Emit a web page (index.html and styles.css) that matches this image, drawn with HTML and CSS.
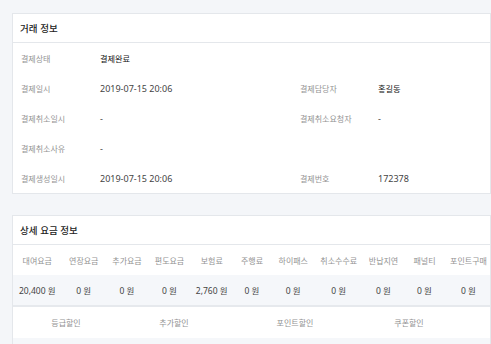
FILE: index.html
```html
<!DOCTYPE html>
<html lang="ko">
<head>
<meta charset="utf-8">
<title>거래 정보</title>
<link rel="stylesheet" href="styles.css">
</head>
<body>
<div class="page">
  <section class="card">
    <h2 class="card-title">거래 정보</h2>
    <div class="info">
      <div class="info-row">
        <span class="lbl">결제상태</span><span class="val strong">결제완료</span>
      </div>
      <div class="info-row">
        <span class="lbl">결제일시</span><span class="val num">2019-07-15 20:06</span>
        <span class="lbl">결제담당자</span><span class="val strong">홍길동</span>
      </div>
      <div class="info-row">
        <span class="lbl">결제취소일시</span><span class="val num">-</span>
        <span class="lbl">결제취소요청자</span><span class="val num">-</span>
      </div>
      <div class="info-row">
        <span class="lbl">결제취소사유</span><span class="val num">-</span>
      </div>
      <div class="info-row">
        <span class="lbl">결제생성일시</span><span class="val num">2019-07-15 20:06</span>
        <span class="lbl">결제번호</span><span class="val num">172378</span>
      </div>
    </div>
  </section>

  <section class="card">
    <h2 class="card-title">상세 요금 정보</h2>
    <div class="fees">
      <div class="fee-grid fee-head">
        <span>대여요금</span><span>연장요금</span><span>추가요금</span><span>편도요금</span><span>보험료</span><span>주행료</span><span>하이패스</span><span>취소수수료</span><span>반납지연</span><span>패널티</span><span>포인트구매</span>
      </div>
      <div class="fee-grid fee-vals">
        <span>20,400 원</span><span>0 원</span><span>0 원</span><span>0 원</span><span>2,760 원</span><span>0 원</span><span>0 원</span><span>0 원</span><span>0 원</span><span>0 원</span><span>0 원</span>
      </div>
      <div class="disc-grid disc-head">
        <span>등급할인</span><span>추가할인</span><span>포인트할인</span><span>쿠폰할인</span><span></span>
      </div>
      <div class="disc-grid disc-vals">
        <span></span><span></span><span></span><span></span><span></span>
      </div>
    </div>
  </section>
</div>
</body>
</html>
```

FILE: styles.css
```css
html, body {
  margin: 0;
  padding: 0;
}

body {
  background: #f4f6f9;
  font-family: "Noto Sans", "Noto Sans CJK KR", sans-serif;
  color: #333;
  overflow: hidden;
}

.page {
  padding: 13px 0 0 12px;
  height: 344px;
  box-sizing: border-box;
  display: flex;
  flex-direction: column;
  gap: 21px;
  overflow: hidden;
}

.card {
  background: #fff;
  border: 1px solid #e4e7eb;
  overflow: hidden;
  flex: none;
}

.card-title {
  margin: 0;
  height: 28px;
  padding-left: 7px;
  display: flex;
  align-items: center;
  font-size: 9.5px;
  font-weight: 500;
  color: #222;
  border-bottom: 1px solid #e4e7eb;
  font-family: "Noto Sans CJK KR", sans-serif;
}

.info {
  display: flex;
  flex-direction: column;
}

.info-row {
  display: grid;
  grid-template-columns: 79px 200px 78px 1fr;
  height: 30px;
  align-items: center;
  padding-left: 8px;
}

.lbl {
  font-family: "Noto Sans CJK KR", sans-serif;
  font-size: 8px;
  color: #939393;
}

.val {
  color: #444;
}

.val.strong {
  font-family: "Noto Sans CJK KR", sans-serif;
  font-size: 8.2px;
  color: #111;
  font-weight: 400;
}

.val.num {
  font-size: 9px;
  color: #444;
}

.fees {
  width: 490px;
}

.fee-grid {
  display: grid;
  grid-template-columns: 48.5px 44.5px 42px 43px 41.5px 39px 43.5px 47.5px 42px 40px 48px;
  align-items: center;
  justify-items: center;
  white-space: nowrap;
}

.fee-head {
  height: 30px;
  font-family: "Noto Sans CJK KR", sans-serif;
  font-size: 8px;
  color: #939393;
}

.fee-vals {
  height: 30px;
  background: #f5f7fa;
  border-bottom: 2px solid #e6e9ed;
  font-size: 8.5px;
  color: #444;
}

.disc-grid {
  display: grid;
  grid-template-columns: 106px 110px 132px 96px 1fr;
  align-items: center;
  justify-items: center;
}

.disc-head {
  height: 31px;
  font-family: "Noto Sans CJK KR", sans-serif;
  font-size: 8px;
  color: #939393;
}

.disc-vals {
  height: 30px;
  background: #f5f7fa;
}
```
